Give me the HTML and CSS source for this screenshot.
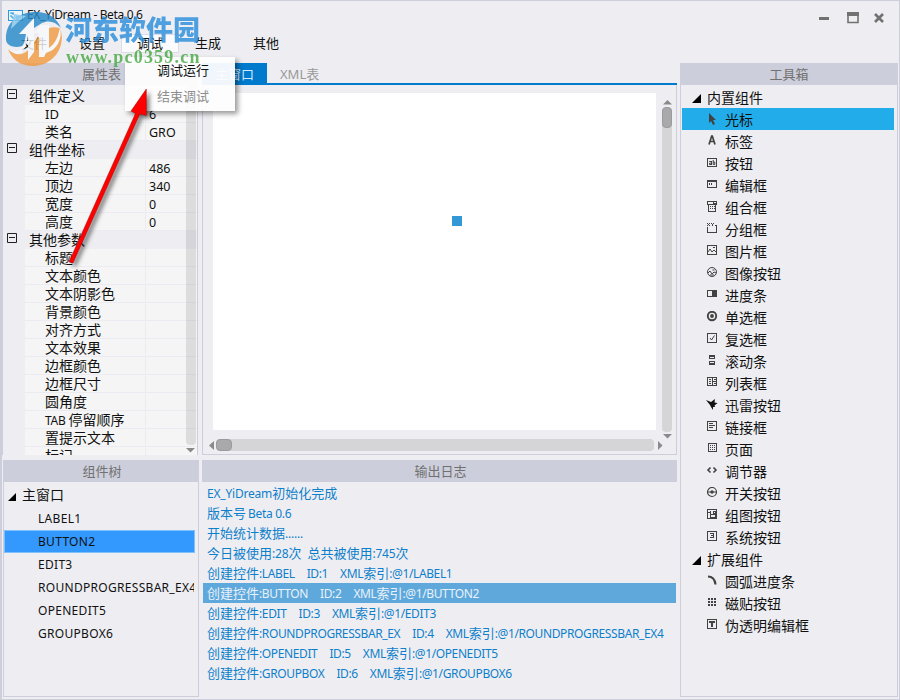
FILE: index.html
```html
<!DOCTYPE html>
<html lang="zh-CN">
<head>
<meta charset="utf-8">
<title>EX_YiDream - Beta 0.6</title>
<link rel="stylesheet" href="styles.css">
</head>
<body>
<div class="window">
  <header class="titlebar">
    <svg class="app-icon" width="15" height="11" viewBox="0 0 15 11"><rect x=".5" y=".5" width="14" height="10" fill="#eef6fc" stroke="#2d9bd8"/><path d="M2 3h2v1h2M5 2v2M2 6h2v2h2M8 7h5M8 9h3" fill="none" stroke="#2d9bd8"/></svg>
    <span class="app-title">EX_YiDream - Beta 0.6</span>
    <svg class="controls" width="68" height="14" viewBox="0 0 68 14" fill="none" stroke="#717171"><path d="M1 6.500h10" stroke-width="3"/><path d="M30 1v9.500h10V1" stroke-width="1.600"/><path d="M29 2h12" stroke-width="4"/><path d="M57 2l8 8M65 2l-8 8" stroke-width="2.600"/></svg>
  </header>
  <nav class="menu"><span>文件</span><span>设置</span><span class="open">调试</span><span>生成</span><span>其他</span></nav>

  <main class="workspace">
    <div class="left">
      <section class="props">
        <h2 class="bar">属性表</h2>
        <div class="grid">
          <div class="group"><svg class="minus" width="10" height="10" viewBox="0 0 10 10"><path d="M.5.5h9v9h-9zM2 4.500h6" fill="none" stroke="#222"/></svg>组件定义</div>
          <div class="prop"><span><i class="id">ID</i></span><b>6</b></div>
          <div class="prop"><span>类名</span><b>GRO</b></div>
          <div class="group"><svg class="minus" width="10" height="10" viewBox="0 0 10 10"><path d="M.5.5h9v9h-9zM2 4.500h6" fill="none" stroke="#222"/></svg>组件坐标</div>
          <div class="prop"><span>左边</span><b>486</b></div>
          <div class="prop"><span>顶边</span><b>340</b></div>
          <div class="prop"><span>宽度</span><b>0</b></div>
          <div class="prop"><span>高度</span><b>0</b></div>
          <div class="group"><svg class="minus" width="10" height="10" viewBox="0 0 10 10"><path d="M.5.5h9v9h-9zM2 4.500h6" fill="none" stroke="#222"/></svg>其他参数</div>
          <div class="prop"><span>标题</span><b></b></div>
          <div class="prop"><span>文本颜色</span><b></b></div>
          <div class="prop"><span>文本阴影色</span><b></b></div>
          <div class="prop"><span>背景颜色</span><b></b></div>
          <div class="prop"><span>对齐方式</span><b></b></div>
          <div class="prop"><span>文本效果</span><b></b></div>
          <div class="prop"><span>边框颜色</span><b></b></div>
          <div class="prop"><span>边框尺寸</span><b></b></div>
          <div class="prop"><span>圆角度</span><b></b></div>
          <div class="prop"><span><i class="tab-key">TAB</i>停留顺序</span><b></b></div>
          <div class="prop"><span>置提示文本</span><b></b></div>
          <div class="prop"><span>标记</span><b></b></div>
          <div class="prop-scroll"><div class="prop-track"></div><svg width="10" height="5" viewBox="0 0 10 5"><path d="M0 0h9L4.500 4.500z" fill="#8a8a8a"/></svg></div>
        </div>
      </section>
      <section class="tree">
        <h2 class="bar">组件树</h2>
        <div class="tree-body">
          <div class="root"><svg width="9" height="8" viewBox="0 0 9 8"><path d="M8 0v8H0z"/></svg>主窗口</div>
          <div class="node">LABEL1</div>
          <div class="node selected">BUTTON2</div>
          <div class="node">EDIT3</div>
          <div class="node">ROUNDPROGRESSBAR_EX4</div>
          <div class="node">OPENEDIT5</div>
          <div class="node">GROUPBOX6</div>
        </div>
      </section>
    </div>

    <div class="center">
      <section class="editor">
        <div class="tabs"><span class="tab active">主窗口</span><span class="tab">XML表</span></div>
        <div class="stage">
          <div class="canvas"><div class="handle"></div></div>
          <div class="vscroll">
            <svg width="9" height="5" viewBox="0 0 9 5"><path d="M0 4.500h9L4.500 0z" fill="#8a8a8a"/></svg>
            <div class="track"><div class="thumb"></div></div>
            <svg width="9" height="5" viewBox="0 0 9 5"><path d="M0 0h9L4.500 4.500z" fill="#8a8a8a"/></svg>
          </div>
          <div class="hscroll">
            <svg width="5" height="9" viewBox="0 0 5 9"><path d="M5 0v9L0 4.500z" fill="#8a8a8a"/></svg>
            <div class="track"><div class="thumb"></div></div>
            <svg width="5" height="9" viewBox="0 0 5 9"><path d="M0 0v9l4.500-4.500z" fill="#8a8a8a"/></svg>
          </div>
        </div>
      </section>
      <section class="log">
        <h2 class="bar">输出日志</h2>
        <div class="line"><i class="w1">EX_YiDream</i>初始化完成</div>
        <div class="line">版本号<i class="w2">Beta 0.6</i></div>
        <div class="line">开始统计数据<i>......</i></div>
        <div class="line">今日被使用<i>:28</i>次<i class="gap">&nbsp;</i>总共被使用<i>:745</i>次</div>
        <div class="line">创建控件<i class="c">:LABEL</i><i class="c id-col">ID:1</i><i class="c">XML</i>索引<i class="c">:@1/LABEL1</i></div>
        <div class="line picked">创建控件<i class="c">:BUTTON</i><i class="c id-col">ID:2</i><i class="c">XML</i>索引<i class="c">:@1/BUTTON2</i></div>
        <div class="line">创建控件<i class="c">:EDIT</i><i class="c id-col">ID:3</i><i class="c">XML</i>索引<i class="c">:@1/EDIT3</i></div>
        <div class="line">创建控件<i class="c">:ROUNDPROGRESSBAR_EX</i><i class="c id-col">ID:4</i><i class="c">XML</i>索引<i class="c">:@1/ROUNDPROGRESSBAR_EX4</i></div>
        <div class="line">创建控件<i class="c">:OPENEDIT</i><i class="c id-col">ID:5</i><i class="c">XML</i>索引<i class="c">:@1/OPENEDIT5</i></div>
        <div class="line">创建控件<i class="c">:GROUPBOX</i><i class="c id-col">ID:6</i><i class="c">XML</i>索引<i class="c">:@1/GROUPBOX6</i></div>
      </section>
    </div>

    <section class="toolbox">
      <h2 class="bar">工具箱</h2>
      <div class="tools">
        <div class="cat"><svg width="10" height="9" viewBox="0 0 10 9"><path d="M9 0v9H0z"/></svg>内置组件</div>
        <div class="tool current"><svg viewBox="0 0 12 12"><path d="M3 0v10l2-2 2 4 2-1-2-4h3z" fill="#424242"/></svg>光标</div>
        <div class="tool"><svg viewBox="0 0 12 12"><path class="soft" d="M3 9.500L5.700 1h.6L9 9.500M4 6.500h4" stroke-width="1.700"/></svg>标签</div>
        <div class="tool"><svg viewBox="0 0 12 12"><path d="M1.500 1.500h9v8h-9z"/><path class="soft" d="M5.500 4v4M5.500 6.200H3.500v1.300h2M3.200 4.500h2M7.200 3v4.500h1.600V5H7.200"/></svg>按钮</div>
        <div class="tool"><svg viewBox="0 0 12 12"><path d="M1.500 1.500h9v7h-9zM1 2.500h10M3.500 4v2M5.500 4v2"/></svg>编辑框</div>
        <div class="tool"><svg viewBox="0 0 12 12"><path d="M1.500.5h9v3h-9zM2.500 3.500v7h7v-7M7.500.5v3M8 2h2"/><path d="M4 5.500h1M6 5.500h1M8 5.500h1M4 7.500h1M6 7.500h1M8 7.500h1"/></svg>组合框</div>
        <div class="tool"><svg viewBox="0 0 12 12"><path d="M1.500 4v5.500h9V2.500H9M1 .5h1M3 .5h1M2 1.500h1M1 2.500h1M3 2.500h1M5 .5h1M7 .5h1M6 1v2"/></svg>分组框</div>
        <div class="tool"><svg viewBox="0 0 12 12"><path d="M1.500.5h9v9h-9z"/><path class="soft" d="M2 7l2-3 2 3 2-2 2 2M7 2.500h2"/></svg>图片框</div>
        <div class="tool"><svg viewBox="0 0 12 12"><circle class="soft" cx="6" cy="5" r="4.500"/><path class="soft" d="M2 6l2-2 2 3 2-2 2 1M6.500 3h2M4 8h4"/></svg>图像按钮</div>
        <div class="tool"><svg viewBox="0 0 12 12"><path d="M1.500 1.500h9v6h-9z"/><path d="M6 1h5v7H6z" fill="#424242" stroke="none"/></svg>进度条</div>
        <div class="tool"><svg viewBox="0 0 12 12"><circle class="soft" cx="6" cy="5" r="4.200" stroke-width="1.900"/><circle class="soft" cx="6" cy="5" r="1.900" fill="#424242" stroke="none"/></svg>单选框</div>
        <div class="tool"><svg viewBox="0 0 12 12"><path d="M1.500.5h9v9h-9z"/><path class="soft" d="M4 5l1.500 2L8.500 2.500"/></svg>复选框</div>
        <div class="tool"><svg viewBox="0 0 12 12"><path d="M3.500.5h5v3h-5zM3.500 6.500h5v3h-5zM3 1.500h6M3 8.500h6"/></svg>滚动条</div>
        <div class="tool"><svg viewBox="0 0 12 12"><path d="M1.500.5h9v8h-9zM6.500 0v9M7 4.500h4M3 2.500h2M3 4.500h2M3 6.500h2M8 2.500h2M8 6.500h2"/></svg>列表框</div>
        <div class="tool"><svg viewBox="0 0 12 12"><path class="bird" d="M0 1l5 2 4-3-.5 3.500L11.500 4 8.500 6.500 9 8 7 8l0 3-2-3-1-2z"/></svg>迅雷按钮</div>
        <div class="tool"><svg viewBox="0 0 12 12"><path d="M1.500.5h9v9h-9zM3 2.500h4M3 4.500h6M3 6.500h4"/></svg>链接框</div>
        <div class="tool"><svg viewBox="0 0 12 12"><path d="M2.500.5h8v8h-8z"/><path d="M4 2.500h6M4 4.500h6M4 6.500h6" stroke-dasharray="1 1"/></svg>页面</div>
        <div class="tool"><svg viewBox="0 0 12 12"><path class="soft" d="M4.500 2.500L2 5l2.500 2.500M7.500 2.500L10 5 7.500 7.500" stroke-width="1.600"/></svg>调节器</div>
        <div class="tool"><svg viewBox="0 0 12 12"><circle class="soft" cx="6" cy="5" r="4.500" stroke-width="1.200"/><path class="soft" d="M2 5h8" /><circle class="soft" cx="6" cy="5" r="1.700" fill="#424242" stroke="none"/></svg>开关按钮</div>
        <div class="tool"><svg viewBox="0 0 12 12"><path d="M1.500.5h9v9h-9zM2 3.500h2M4.500 2v3h3M7.500 2.500h2v2h-2zM4.500 5.500h5v3h-5z"/></svg>组图按钮</div>
        <div class="tool"><svg viewBox="0 0 12 12"><path d="M1.500.5h9v9h-9zM4 2.500h3.500v4H4M5 4.500h3"/></svg>系统按钮</div>
        <div class="cat"><svg width="10" height="9" viewBox="0 0 10 9"><path d="M9 0v9H0z"/></svg>扩展组件</div>
        <div class="tool"><svg viewBox="0 0 12 12"><path class="soft" d="M2 1.500c4 0 7 3 7.500 8" stroke-width="2.200"/></svg>圆弧进度条</div>
        <div class="tool"><svg viewBox="0 0 12 12"><path d="M2 2h8M2 5h8M2 8h8" stroke-width="2" stroke-dasharray="2 1"/></svg>磁贴按钮</div>
        <div class="tool"><svg viewBox="0 0 12 12"><path d="M1.500.5h9v9h-9z"/><path d="M3 3h6M6 2v6" stroke-width="2"/></svg>伪透明编辑框</div>
      </div>
    </section>
  </main>

  <div class="popup"><span>调试运行</span><span class="disabled">结束调试</span></div>

  <div class="brand">
    <svg class="brand-logo" width="64" height="60" viewBox="0 0 64 60">
      <path d="M2 32C1 14 15 4 32 4c12 0 21 6 25 16-6-7-13-8-19-5l-8 5-3 9-9 9C12 40 3 39 2 32z" fill="#2789c8"/>
      <path d="M56 20c7 19-7 37-25 38C18 59 8 52 4 41c8 8 16 6 21 0l6-8 8-9c6-6 11-5 17-4z" fill="#f29c42"/>
      <path d="M4 41c13 7 16-3 18-15h-7l15-16v34l-6 8V27c-2 14-6 25-20 14zM35 49V25h-5l7-8h8v23c6-4 10-12 11-22 3 15-4 24-14 27l-2 4z" fill="#f7fafc"/>
      <path d="M10 6l12 2-8 6-7 7z" fill="#8ac8ed"/>
    </svg>
    <div class="brand-name">河东软件园</div>
    <div class="brand-url">www.pc0359.cn</div>
  </div>
  <svg class="pointer" width="100" height="190" viewBox="0 0 100 190"><path d="M9 182L75.500 33.500 71 31 86.300 9v26.500l-6.500-1.500L13 183z" fill="#f00" stroke="#a00" stroke-width=".5"/></svg>
</div>
</body>
</html>
```
FILE: styles.css
```css
* { box-sizing: border-box; }
body { margin: 0; font: 14px/22px "Noto Sans", "Noto Sans CJK SC", sans-serif; color: #111; }
i, b { font-style: normal; font-weight: 400; }
svg { display: block; flex: none; }
.window { position: relative; width: 900px; height: 700px; overflow: hidden; background: #eeeef2; border: 1px solid #cccedb; border-left-width: 2px; }
.titlebar { display: flex; height: 29px; padding: 0 13px 0 6px; align-items: flex-start; }
.app-icon { margin-top: 9px; }
.app-title { margin: 3px auto 0 4px; font-size: 12px; letter-spacing: -.35px; white-space: nowrap; }
.controls { margin: 11px 0 0; }
.menu { display: flex; height: 33px; padding: 4px 0 0 3px; font-size: 13px; }
.menu span { width: 58px; height: 19px; line-height: 19px; text-align: center; }
.menu .open { background: #fbfbfd; border: 1px solid #dddde7; line-height: 17px; }

.workspace { display: grid; grid-template-columns: 196px 475px 217px; column-gap: 4px; height: 634px; }
.toolbox { margin-left: -1px; }
.bar { margin: 0; height: 22px; background: #cccedb; color: #717171; font-size: 13px; font-weight: 400; line-height: 23px; text-align: center; }
.left, .center { display: flex; flex-direction: column; gap: 5px; }
.props { height: 392px; }
.props .bar { padding-left: 3px; }
.grid { position: relative; height: 370px; padding-top: 2px; overflow: hidden; border: solid #cccedb; border-width: 0 1px; }
.group { display: flex; height: 18px; line-height: 18px; padding-left: 4px; gap: 12px; }
.minus { margin-top: 2px; }
.prop { display: grid; grid-template-columns: 121px 1fr; height: 18px; margin-left: 22px; background: #f5f5f5; border-bottom: 1px solid #ebebf1; line-height: 18px; }
.prop span { padding-left: 20px; border-right: 1px solid #ebebf1; white-space: nowrap; }
.prop b { padding-left: 3px; font-size: 12.500px; line-height: 19px; }
.id { font-size: 13px; }
.tab-key { font-size: 12px; letter-spacing: -.3px; margin-right: 3px; }
.prop-scroll { position: absolute; right: 1px; top: 0; height: 100%; width: 10px; }
.prop-track { height: 360px; margin-bottom: 3px; background: rgba(0,0,0,.1); border-radius: 0 0 4px 4px; }
.tree { height: 237px; width: 196px; margin-left: 1px; }
.tree .bar { padding-left: 2px; }
.tree-body { height: 215px; padding: 2px 0 0; border: 1px solid #cccedb; border-top: 0; overflow: hidden; }
.root { display: flex; align-items: center; gap: 5px; height: 23px; padding: 0 0 1px 4px; }
.root svg { margin-top: 4px; }
.node { width: 191px; height: 23px; padding-left: 33px; overflow: hidden; font-size: 12px; line-height: 21px; white-space: nowrap; border: 1px solid transparent; letter-spacing: .3px; }
.selected { background: #3399ff; border-color: #7fc0ff; }

.editor { height: 392px; }
.tabs { display: flex; height: 22px; border-bottom: 2px solid #007acc; font-size: 13px; color: #999; }
.tab { height: 20px; line-height: 22px; padding: 0 13px; }
.active { width: 65px; background: #007acc; color: #cfe9fa; }
.stage { display: grid; grid-template-columns: 443px 10px; grid-template-rows: 346px 12px; column-gap: 6px; height: 370px; padding-left: 10px; border: 1px solid #cccedb; border-top: 0; }
.canvas { width: 443px; height: 337px; margin-top: 8px; padding: 123px 0 0 239px; background: #fff; }
.handle { width: 10px; height: 10px; background: #3399d6; }
.vscroll { display: flex; flex-direction: column; align-items: center; height: 339px; margin-top: 15px; gap: 2px; }
.vscroll .track { width: 10px; height: 325px; }
.track { background: #d5d5d7; border-radius: 4px; }
.thumb { background: #a9a9ab; border: 1px solid #9b9b9d; border-radius: 4px; }
.vscroll .thumb { height: 21px; }
.hscroll { display: flex; align-items: center; width: 454px; margin: 8px 0 0 -4px; height: 12px; gap: 3px; }
.hscroll .track { width: 438px; height: 12px; margin: 0 1px 0 -1px; }
.hscroll .thumb { width: 16px; height: 12px; }
.log { height: 237px; color: #0e7fcb; }
.log .bar { margin-bottom: 1px; padding-left: 2px; }
.line { height: 20px; margin: 0 1px; padding-left: 4px; line-height: 20px; font-size: 13px; white-space: pre; }
.line i { font-size: 12px; letter-spacing: -.2px; }
.line .c { letter-spacing: -.38px; }
.line .id-col { margin: 0 12px; }
.line .gap { display: inline-block; width: 6px; }
.line .w2 { margin-left: 2px; letter-spacing: -.3px; }
.picked { background: #5fa8dc; color: #e8f2fa; }

.tools { height: 612px; padding-top: 1px; border: 1px solid #cccedb; border-top: 0; }
.cat { display: flex; align-items: center; height: 22px; padding: 2px 0 0 11px; gap: 5px; }
.tool { display: flex; height: 22px; margin: 0 3px 0 1px; padding: 5px 0 0 24px; gap: 7px; line-height: 14px; }
.tool svg { width: 12px; height: 12px; fill: none; stroke: #424242; stroke-width: 1; shape-rendering: crispEdges; }
.tool .soft, .tool .bird, .current path { shape-rendering: auto; }
.tool .bird { fill: #111; stroke: none; }
.current { background: #22adea; }
.current svg { stroke: none; }

.popup { position: absolute; left: 123px; top: 56px; width: 110px; height: 54px; background: rgba(253,253,254,.95); box-shadow: 3px 3px 5px rgba(0,0,0,.4); font-size: 13px; }
.popup span { display: block; height: 26px; padding: 2px 0 0 32px; }
.popup .disabled { color: #8d8d8d; }
.brand { position: absolute; left: 2px; top: 7px; width: 210px; height: 62px; opacity: .82; }
.brand-logo { position: absolute; left: 0; top: 0; }
.brand-name { position: absolute; left: 61px; top: 6px; font: 900 27px/30px "Noto Sans CJK SC", sans-serif; color: #2c8edb; white-space: nowrap; }
.brand-url { position: absolute; left: 62px; top: 38px; font: bold 18px/22px "Liberation Serif", serif; color: #48a944; letter-spacing: 1.200px; }
.pointer { position: absolute; left: 58px; top: 79px; filter: drop-shadow(3px 3px 2px rgba(0,0,0,.5)); }
```
